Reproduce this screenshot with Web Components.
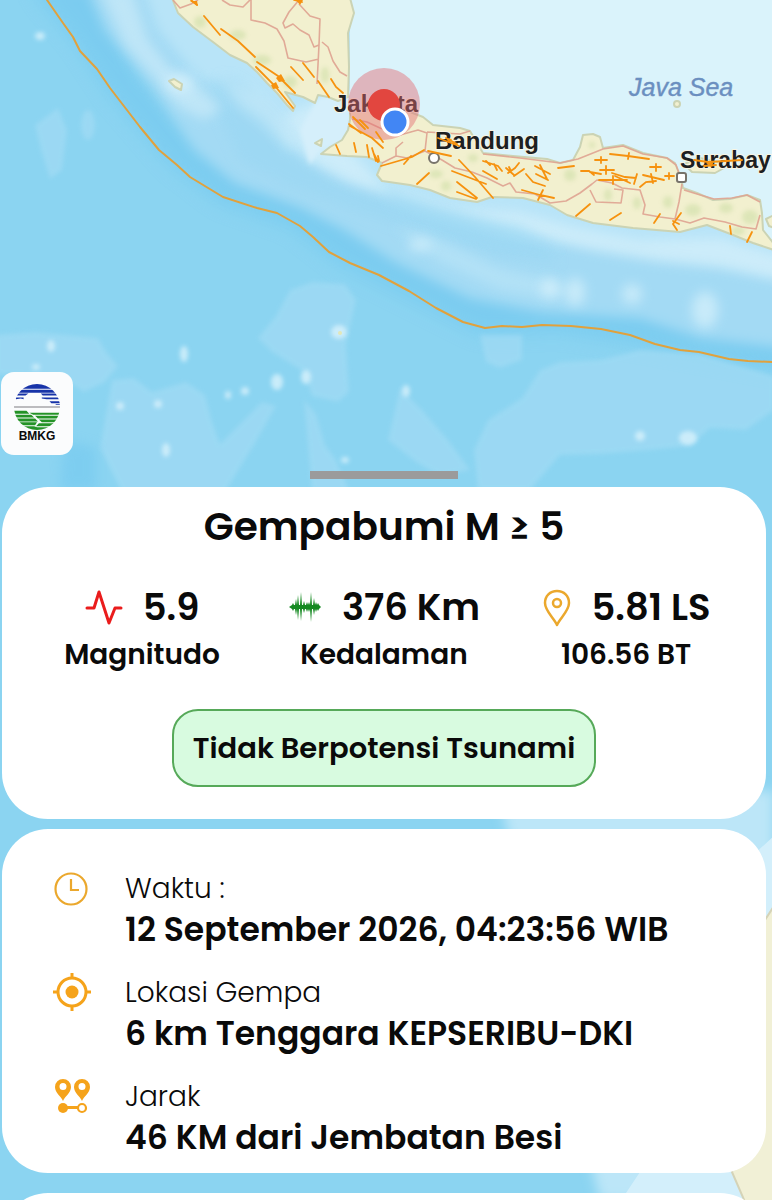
<!DOCTYPE html>
<html lang="id">
<head>
<meta charset="utf-8">
<meta name="viewport" content="width=device-width, initial-scale=1">
<title>Gempabumi M ≥ 5</title>
<style>
body { margin: 0; background: #8bd4f1; font-family: Poppins, Inter, "Open Sans", sans-serif; color: #0a0a0a; }
</style>
</head>
<body>
<quake-app></quake-app>

<script>
const define = (name, html) => {
  const template = document.createElement('template');
  template.innerHTML = html;
  customElements.define(name, class extends HTMLElement {
    constructor() {
      super();
      this.attachShadow({ mode: 'open' }).append(template.content.cloneNode(true));
    }
  });
};

define('quake-map', `
<style>
  :host { display: block; overflow: hidden; }
  svg { display: block; width: 100%; height: 100%; }
  text { font-family: "Liberation Sans", Arial, sans-serif; }
</style>
<svg viewBox="0 0 772 1200" preserveAspectRatio="xMidYMin slice" role="img" aria-label="Peta lokasi gempa">
  <defs>
    <filter id="b2" x="-30%" y="-30%" width="160%" height="160%"><feGaussianBlur stdDeviation="2"/></filter>
    <filter id="b5" x="-30%" y="-30%" width="160%" height="160%"><feGaussianBlur stdDeviation="6"/></filter>
    <filter id="b9" x="-30%" y="-30%" width="160%" height="160%"><feGaussianBlur stdDeviation="9"/></filter>
    <clipPath id="land">
      <path d="M172 0L178 13L193 27L213 42L230 55L247 63L257 72L267 83L277 93L287 105L293 111L295 106L285 92L303 97L315 103L318 95L328 97L348 97L349 67L348 33L354 13L350 0Z"/>
      <path d="M350 120L348 130L342 140L330 147L321 154L347 156L367 157L382 163L377 175L382 181L410 185L430 190L450 198L477 202L492 197L523 198L550 205L567 215L593 223L633 228L680 232L707 225L733 235L753 243L772 250V244L763 230L762 213L760 200L747 195L730 199L713 200L697 193L683 188L681 178L675 163L667 158L643 153L623 145L603 148L600 137L593 134L583 135L580 147L573 160L560 163L547 159L513 156L483 153L470 131L460 128L433 125L423 117L400 108L350 110Z"/>
    </clipPath>
  </defs>
  <rect width="772" height="1200" fill="#8bd4f1"/>

  <!-- deep trench along the subduction line, then the shelf above it -->
  <path d="M40 0L77 45L110 95L170 165L220 203L290 227L340 265L410 300L480 335L560 332L640 345L800 375V300L640 305L560 295L480 285L400 245L330 205L260 175L200 145L140 75L100 -20H30Z" fill="#78cbf0" opacity=".8" filter="url(#b9)"/>
  <path d="M84 -20L105 30L150 85L195 150L235 183L300 207L345 230L395 262L470 298L540 312L640 318L700 338L800 350V120L300 -20Z" fill="#a3daf4" filter="url(#b5)"/>
  <path d="M140 -20L158 30L190 68L235 108L285 150L340 178L400 198L450 215L540 236L640 252L720 262L800 280V120L300 -20Z" fill="#b8e4f8" filter="url(#b5)"/>
  <path d="M205 82L235 78L275 115L290 150L335 182L400 205L480 225L545 246L560 262L500 256L430 236L360 212L290 186L240 160Z" fill="#9ad7f3" opacity=".6" filter="url(#b5)"/>
  <path d="M100 -10L125 45L155 78L180 108L205 120L222 108L200 88L172 70L148 40L132 -10Z" fill="#cdecf9" opacity=".65" filter="url(#b5)"/>
  <path d="M285 115L345 90L350 150L385 188L450 208L520 212L570 226L640 240L720 238L800 262V285L720 268L660 262L590 250L500 228L430 208L350 182L310 160Z" fill="#d5f0fb" opacity=".7" filter="url(#b5)"/>
  <path d="M220 75L260 95L285 120L300 140L290 150L262 120L240 105Z" fill="#cdecf9" opacity=".5" filter="url(#b5)"/>
  <path d="M385 190L440 208L520 226L560 248L500 240L430 222L395 208Z" fill="#a0dbf5" opacity=".6" filter="url(#b5)"/>
  <path d="M395 226L440 240L500 268L560 282L560 300L500 290L440 262Z" fill="#b6e3f7" opacity=".8" filter="url(#b5)"/>
  <path d="M318 98L352 90L350 140L320 150L310 165L300 130Z" fill="#d5effb" filter="url(#b2)"/>
  <path d="M350 -2H774V248L745 215L690 205L660 190L570 180L480 170L350 125Z" fill="#daf3fb"/>
  <g fill="#d8f2fc" filter="url(#b5)" opacity=".7">
    <ellipse cx="550" cy="288" rx="10" ry="10"/><ellipse cx="575" cy="292" rx="10" ry="14"/><ellipse cx="632" cy="294" rx="10" ry="10"/>
    <ellipse cx="705" cy="310" rx="13" ry="18"/><ellipse cx="420" cy="245" rx="12" ry="6"/><ellipse cx="180" cy="83" rx="14" ry="10"/>
  </g>
  <g fill="#a2dbf4" filter="url(#b2)" opacity=".7">
    <path d="M35 125L58 108L67 130L62 170L50 179L41 150Z"/><ellipse cx="88" cy="125" rx="7" ry="15"/>
    <path d="M290 290L312 282L345 284L356 300L346 345L349 392L338 402L312 396L304 372L272 352L258 338L276 316Z"/>
    <path d="M-4 335L35 332L98 338L106 352L118 366L105 382L84 392L60 376L-4 374Z"/>
    <path d="M112 380L134 378L152 392L186 382L205 395L212 422L220 444L262 402L276 406L258 438L225 492H122L100 448Z"/>
    <path d="M560 362L600 360L640 350L700 354L774 376V410L746 430L710 428L690 446L650 450L600 454L560 455L530 490H478L474 450L488 420L522 398L540 370Z"/>
    <path d="M304 400L316 414L325 445L336 460L350 492H312Z"/>
    <path d="M400 388L422 410L448 440L470 470L440 476L416 462L388 440Z"/>
    <path d="M480 335H522V360L500 368L486 362Z"/>
  </g>
  <g fill="#d8f2fc" filter="url(#b2)" opacity=".8">
    <ellipse cx="40" cy="36" rx="5" ry="4"/><ellipse cx="339" cy="332" rx="8" ry="7"/><ellipse cx="306" cy="377" rx="5" ry="7"/>
    <ellipse cx="277" cy="382" rx="6" ry="8"/><ellipse cx="245" cy="391" rx="4" ry="4"/><ellipse cx="228" cy="395" rx="3" ry="4"/><ellipse cx="158" cy="404" rx="4" ry="4"/>
    <ellipse cx="120" cy="406" rx="4" ry="4"/><ellipse cx="406" cy="391" rx="4" ry="6"/><ellipse cx="51" cy="346" rx="4" ry="6"/>
    <ellipse cx="166" cy="450" rx="4" ry="7"/><ellipse cx="345" cy="460" rx="4" ry="3"/><ellipse cx="640" cy="436" rx="5" ry="5"/>
    <ellipse cx="688" cy="438" rx="9" ry="7"/><ellipse cx="184" cy="354" rx="4" ry="8"/><ellipse cx="36" cy="367" rx="4" ry="3"/>
  </g>
  <circle cx="340" cy="333" r="2" fill="#e3e7b8"/>
  <path d="M64 440L96 448V490H60Z" fill="#74c9f0" opacity=".6" filter="url(#b5)"/>
  <path d="M500 800L774 790V1202H700L600 1200Z" fill="#bce6f8" filter="url(#b5)"/>
  <path d="M752 856L774 836V1202H620L640 1172H752Z" fill="#d3effb"/>
  <path d="M774 906L765 920L740 1000V1120L732 1172L745 1202H774Z" fill="#f1f0d6" stroke="#d5d3b7" stroke-width="2"/>

  <!-- islands -->
  <g fill="#f2f0cf" stroke="#cbd3b4" stroke-width="2" stroke-linejoin="round">
    <path d="M172 -2L178 13L193 27L213 42L230 55L247 63L257 72L267 83L277 93L287 105L293 111L295 106L285 92L303 97L315 103L318 95L328 97L338 101L348 97L349 67L348 33L354 13L350 -2Z"/>
    <path d="M350 120L348 130L342 140L330 147L321 154L347 156L367 157L382 163L377 175L382 181L410 185L430 190L450 198L477 202L492 197L523 198L550 205L567 215L593 223L633 228L680 232L707 225L733 235L753 243L774 250V244L763 230L762 213L760 200L747 195L730 199L713 200L697 193L683 188L681 178L675 163L667 158L643 153L623 145L603 148L600 137L593 134L583 135L580 147L573 160L560 163L547 159L513 156L483 153L470 131L460 128L433 125L423 117L400 108L350 110Z"/>
    <path d="M684 164L700 158L722 163L724 168L715 173L692 172Z"/>
    <path d="M169 81L174 79L182 84L181 90L175 87Z"/><path d="M315 143L322 139L321 146Z"/>
    <circle cx="677" cy="104" r="3"/><path d="M774 215L766 219L769 226L774 228Z"/>
  </g>
  <g clip-path="url(#land)"><g fill="#c8dba0" opacity=".5" filter="url(#b2)">
    <circle cx="200" cy="22" r="6"/><ellipse cx="238" cy="35" rx="8" ry="5"/><ellipse cx="262" cy="60" rx="9" ry="5"/><ellipse cx="290" cy="82" rx="7" ry="6"/>
    <ellipse cx="325" cy="75" rx="4" ry="8"/><ellipse cx="436" cy="174" rx="7" ry="4"/><ellipse cx="446" cy="186" rx="5" ry="5"/><ellipse cx="473" cy="158" rx="5" ry="4"/>
    <ellipse cx="570" cy="175" rx="6" ry="6"/><ellipse cx="608" cy="195" rx="4" ry="6"/><ellipse cx="637" cy="203" rx="4" ry="6"/>
    <ellipse cx="668" cy="202" rx="5" ry="6"/><ellipse cx="693" cy="210" rx="8" ry="6"/><ellipse cx="726" cy="208" rx="7" ry="5"/>
    <ellipse cx="750" cy="217" rx="8" ry="7"/><ellipse cx="592" cy="145" rx="3" ry="3"/><ellipse cx="738" cy="231" rx="7" ry="4"/>
  </g></g>

  <!-- province borders -->
  <g fill="none" stroke="#dfa391" stroke-width="1.6" stroke-linejoin="round" opacity=".9">
    <path d="M173 0L180 8L191 4L198 0M222 0L230 5L243 7L250 0M251 0L251 20L265 23L277 29L284 41L288 58L306 62L319 59M299 0L289 12L283 23L285 28L293 24L300 30L309 35L314 47L319 45L320 19L310 16L299 4M322 42L328 47L333 61L340 72L347 76M319 45L317 84"/>
    <path d="M352 119L367 122L380 128L400 135L418 130L427 133L425 151L407 158L396 156L396 148L403 142M427 132L460 134L470 131M396 156L382 163M425 151L442 160L455 168L472 172L487 178L503 186L510 183L516 192L535 194L550 203L566 201L580 193L592 184L597 180L612 183L622 188L640 190L645 205L643 214L660 217L675 219L679 202L682 184M483 154L520 158L560 163L578 159L603 149L623 146L643 154L667 158L676 165L680 176M590 190L596 202L621 203L623 190L614 189M675 219L690 223L704 218L725 222L742 227L756 229L760 215M684 190L697 194L714 199L732 198L747 195L760 202"/>
  </g>

  <!-- place names -->
  <g font-weight="700" font-size="24" fill="#1d2021" stroke="#f7f5e4" stroke-width="2" paint-order="stroke">
    <text x="334" y="112">Jakarta</text>
    <text x="435" y="149">Bandung</text>
    <text x="680" y="168" font-size="23">Surabay</text>
  </g>
  <text x="629" y="96" font-size="25" font-style="italic" fill="#6b8fc0" stroke="#6b8fc0" stroke-width=".4">Java Sea</text>
  <g fill="#fff" stroke="#77736b" stroke-width="2"><circle cx="434" cy="158" r="5"/><rect x="677" y="173" width="9" height="9" rx="2"/></g>

  <!-- impact zone, below the fault marks -->
  <circle cx="384" cy="104" r="36" fill="#e36a70" fill-opacity=".45"/>

  <!-- faults -->
  <g fill="none" stroke="#f6920f" stroke-width="1.8" stroke-linecap="round">
    <path d="M204 16L220 35M221 29L238 41L255 57M257 62L278 76L295 93M256 67L275 86L293 108M291 67L303 80M303 63L314 77M318 81L329 97M331 79L336 87L343 93M191 0L197 5M294 0L302 2"/>
    <path d="M336 145L340 154M354 143L356 152M367 145L369 157M372 148L376 161M374 154L378 162M378 156L379 161M349 124L361 133M353 117L365 129M360 120L368 128M350 126L372 138L383 148M376 132L383 142"/>
    <path d="M381 166L412 157L424 150M404 164L411 156M428 151L451 156M417 184L429 173M438 138L459 146M446 138L457 144M459 160L475 177L493 198M452 171L486 184M457 182L477 198M457 192L476 199M483 161L498 166L502 171M486 161L490 165M494 164L497 170M483 171L497 179M506 168L514 175M508 173L515 168L519 163M514 176L524 169M509 167L511 171"/>
    <path d="M526 174L533 182L545 186M535 166L550 174M540 165L547 179M536 174L548 180M522 190L540 195L554 198M543 190L538 200M558 168L574 166M595 160L607 160M601 157V163M581 171L589 171L594 175M590 172L601 174M600 170L614 170M606 166V174M612 173L625 177L636 178M615 176L630 183M599 180L627 180M613 176V184M610 154L628 156L649 159M629 153L628 159M650 167L661 167M656 164V171M643 175L664 180M651 174L653 183M640 187L646 182L656 181M665 176L674 176M669 173V179M637 174L634 184"/>
    <path d="M576 216L590 204M610 220L621 213M654 223L660 214M681 213L673 224L677 230M673 221L679 224M730 226L731 234M752 232L747 242"/>
    <path d="M694 160L708 162L726 161L742 160M704 166L716 165"/>
    <path d="M47 0L63 23L73 37L80 51L97 69L110 88L140 127L159 150L177 165L190 177L223 197L257 208L277 213L300 226L313 237L329 252L350 263L379 275L409 291L436 308L463 322L485 328L502 326L522 327L542 325L571 326L601 329L630 335L655 344L680 350L699 352L729 359L748 361L772 362" stroke="#e1a13c" stroke-width="2" stroke-linejoin="round"/>
  </g>
  <g fill="#f6920f"><path d="M276 78L281 74L285 81L279 82ZM271 85L276 82L279 88L273 89ZM190 1H197L198 6ZM296 0H303L300 5ZM446 138L452 139L449 143ZM706 163L714 162L711 167Z"/></g>

  <circle cx="384" cy="105" r="16" fill="#e2463f"/>
  <circle cx="395" cy="122" r="13" fill="#4286f4" stroke="#fff" stroke-width="3"/>
</svg>`);

define('bmkg-logo', `
<style>
  :host { display: flex; flex-direction: column; align-items: center; justify-content: center;
    box-sizing: border-box; width: 72px; height: 83px; background: #fbfcfd; border-radius: 13px;
    font: 700 12px/13px "Liberation Sans", Arial, sans-serif; }
  svg { width: 46px; height: 46px; }
</style>
<svg viewBox="0 0 48 48" aria-hidden="true">
  <defs><clipPath id="disc"><circle cx="24" cy="24" r="24"/></clipPath></defs>
  <g clip-path="url(#disc)">
    <path fill="#1733a8" d="M0 0H48V5H0ZM0 6H48V9H0ZM0 10H15L12 12H0ZM28 10H48V12H30ZM2 14H10V16L7 15L2 16ZM29 14H48V16H34L29 15ZM37 18H48V20H39ZM43 21H48V22H44Z"/>
    <path d="M0 24H48" stroke="#77777b"/>
    <path fill="#249326" d="M0 28H13L16 31H0ZM16 30H48V32H20ZM0 32H18L21 35H0ZM22 33H48V36H25ZM0 36H22L25 39H0ZM26 37H48V40H29ZM0 40H24L22 43H0ZM26 41H48V44H23ZM8 44H21L24 45H48V48H8Z"/>
  </g>
</svg>
<span>BMKG</span>`);

define('info-card', `
<style>
  :host { display: block; box-sizing: border-box; background: #fff; border-radius: 46px; }
</style>
<slot></slot>`);

define('quake-stat', `
<style>
  :host { display: flex; flex-direction: column; align-items: center; min-width: 0; white-space: nowrap; font-weight: 600; }
  .value { display: flex; align-items: center; gap: 20px; font-size: 37px; line-height: 48px; }
  .label { font-size: 28px; line-height: 48px; }
  ::slotted(svg) { display: block; height: 40px; }
</style>
<div class="value"><slot name="icon"></slot><slot name="value"></slot></div>
<div class="label"><slot></slot></div>`);

define('detail-row', `
<style>
  :host { display: grid; grid-template-columns: 40px 1fr; column-gap: 33px; white-space: nowrap; }
  ::slotted(svg) { display: block; width: 40px; height: 40px; }
  .label { font-size: 28px; line-height: 42px; font-weight: 300; }
  .value { font-size: 33px; line-height: 40px; font-weight: 600; }
</style>
<div><slot name="icon"></slot></div>
<div><div class="label"><slot name="label"></slot></div><div class="value"><slot></slot></div></div>`);

define('quake-app', `
<style>
  :host { display: block; position: relative; height: 100vh; overflow: hidden; }
  quake-map { position: absolute; inset: 0; }
  main { position: relative; display: flex; flex-direction: column; padding: 372px 6px 0 2px; }
  bmkg-logo { margin-left: -1px; }
  .handle { align-self: center; width: 148px; height: 8px; margin: 16px 0 8px; background: #9b9b9b; }
  .summary { padding: 12px 19px 32px; }
  h1 { margin: 0; text-align: center; font-size: 39px; line-height: 56px; font-weight: 600; white-space: nowrap; }
  .stats { display: grid; grid-template-columns: repeat(3, 1fr); margin-top: 28px; }
  .status { box-sizing: border-box; width: fit-content; margin: 30px auto 0; padding: 16px 19px; border: 2px solid #56a959; border-radius: 26px;
    background: #d8fbe0; font-size: 29px; line-height: 42px; font-weight: 600; text-align: center; white-space: nowrap; }
  .details { display: flex; flex-direction: column; gap: 22px; margin-top: 10px; padding: 39px 50px 15px; }
  .next { height: 100px; margin-top: 20px; }
</style>
<quake-map></quake-map>
<main>
  <bmkg-logo></bmkg-logo>
  <div class="handle"></div>
  <info-card class="summary">
    <h1>Gempabumi M ≥ 5</h1>
    <div class="stats">
      <quake-stat>
        <svg slot="icon" width="38" viewBox="0 0 38 40" fill="none" stroke="#ea1c1c" stroke-width="3" stroke-linecap="round" stroke-linejoin="round" aria-hidden="true"><path d="M2 21H9L14 5L24 36L30 21H36"/></svg>
        <span slot="value">5.9</span>Magnitudo
      </quake-stat>
      <quake-stat>
        <svg slot="icon" width="34" viewBox="0 0 34 40" fill="#168a22" aria-hidden="true"><path d="M1 20L4 18L5 16L6 18L7 18L8 12L9 18L10 8L11 18L12 18L13 5L14 18L15 18L16 14L17 18L18 18L19 15L20 18L21 15L22 18L23 5L24 18L25 18L26 11L27 18L28 15L29 18L30 16L31 18L33 20L31 22L30 24L29 22L28 25L27 22L26 28L25 22L24 22L23 35L22 22L21 25L20 22L19 25L18 22L17 22L16 26L15 22L14 22L13 34L12 22L11 22L10 33L9 22L8 28L7 22L6 22L5 24L4 22Z"/></svg>
        <span slot="value">376 Km</span>Kedalaman
      </quake-stat>
      <quake-stat>
        <svg slot="icon" width="30" viewBox="0 0 30 40" fill="none" stroke="#eba82d" stroke-width="2.5" stroke-linejoin="round" aria-hidden="true"><path d="M15 38C12 31 3 24 3 16C3 9 8 4 15 4S27 9 27 16C27 24 18 31 15 38Z"/><circle cx="15" cy="16" r="4"/></svg>
        <span slot="value">5.81 LS</span>106.56 BT
      </quake-stat>
    </div>
    <div class="status">Tidak Berpotensi Tsunami</div>
  </info-card>
  <info-card class="details">
    <detail-row>
      <svg slot="icon" viewBox="0 0 40 40" fill="none" stroke="#eba82d" stroke-width="2.2" aria-hidden="true"><circle cx="19" cy="21" r="15.5"/><path d="M19 11V22H27"/></svg>
      <span slot="label">Waktu :</span>12 September 2026, 04:23:56 WIB
    </detail-row>
    <detail-row>
      <svg slot="icon" viewBox="0 0 40 40" fill="none" stroke="#f5a31b" stroke-width="3" aria-hidden="true"><circle cx="20" cy="20" r="14"/><path d="M20 1V7M20 33V39M1 20H7M33 20H39"/><circle cx="20" cy="20" r="6.5" fill="#f5a31b" stroke="none"/></svg>
      <span slot="label">Lokasi Gempa</span>6 km Tenggara KEPSERIBU-DKI
    </detail-row>
    <detail-row>
      <svg slot="icon" viewBox="0 0 40 40" fill="#f5a31b" aria-hidden="true"><path fill-rule="evenodd" d="M11 25C9 20 3 17 3 11A8 8 0 0 1 19 11C19 17 13 20 11 25ZM11 7A3.5 3.5 0 1 0 11 14A3.5 3.5 0 0 0 11 7ZM30 25C28 20 22 17 22 11A8 8 0 0 1 38 11C38 17 32 20 30 25ZM30 7A3.5 3.5 0 1 0 30 14A3.5 3.5 0 0 0 30 7Z"/><circle cx="11" cy="32" r="5"/><path d="M11 30H26V33H11Z"/><circle cx="30" cy="32" r="4" fill="none" stroke="#f5a31b" stroke-width="2.2"/></svg>
      <span slot="label">Jarak</span>46 KM dari Jembatan Besi
    </detail-row>
  </info-card>
  <info-card class="next"></info-card>
</main>`);
</script>
</body>
</html>
